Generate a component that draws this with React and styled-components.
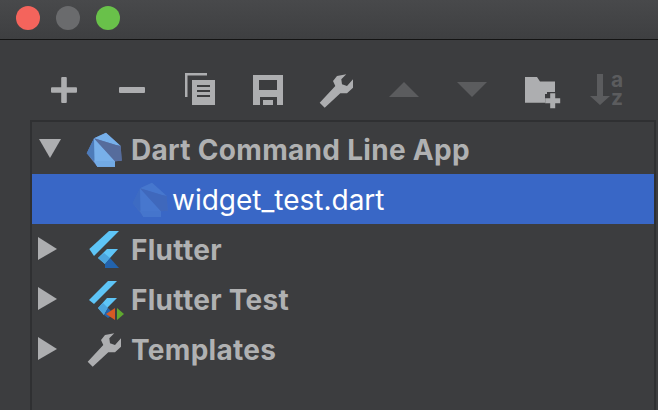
import styled, { createGlobalStyle } from 'styled-components'

const Global = createGlobalStyle`
  html, body { margin: 0; padding: 0; background: #3c3d3f; overflow: hidden; }
`

const Window = styled.div`
  width: 658px;
  height: 410px;
  background: #3c3d3f;
  display: flex;
  flex-direction: column;
  overflow: hidden;
  font-family: Inter, "Liberation Sans", Arial, sans-serif;
`

const TitleBar = styled.div`
  height: 35px;
  flex: none;
  display: flex;
  align-items: center;
  gap: 16px;
  padding: 0 0 4px 16px;
  background: linear-gradient(#48494b, #3e3f41);
  border-bottom: 1px solid #141414;
`

const Light = styled.div`
  width: 24px;
  height: 24px;
  border-radius: 50%;
  background: ${(p) => p.$color};
`

const Toolbar = styled.div`
  height: 80px;
  flex: none;
  display: flex;
  align-items: center;
  padding: 20px 0 0 30px;
  box-sizing: border-box;
`

const ToolButton = styled.div`
  width: 68px;
  height: 40px;
  display: flex;
  align-items: center;
  justify-content: center;
  color: ${(p) => (p.$off ? '#5b5c5e' : '#adaeb0')};
`

const TreePanel = styled.div`
  flex: 1;
  margin: 0 2px 0 30px;
  border: solid #2f3032;
  border-width: 2px 2px 0 2px;
  padding-top: 2px;
`

const Row = styled.div`
  height: 50px;
  display: flex;
  align-items: center;
  background: ${(p) => (p.$selected ? '#3967c6' : 'transparent')};
  color: ${(p) => (p.$selected ? '#ffffff' : '#b0b1b2')};
  font-size: 28px;
  letter-spacing: ${(p) => (p.$selected ? '0' : '0.3px')};
  font-weight: ${(p) => (p.$selected ? 400 : 700)};
`

const Arrow = styled.div`
  width: 30px;
  margin-left: 6px;
  flex: none;
  display: flex;
  color: #adaeb0;
`

const IconSlot = styled.div`
  width: 44px;
  height: 40px;
  margin-left: ${(p) => (p.$indent ? '96px' : '14px')};
  flex: none;
  display: flex;
  align-items: center;
  justify-content: center;
  color: #adaeb0;
`

const Label = styled.span`
  margin-left: ${(p) => (p.$nested ? '0' : '5px')};
  padding-top: 2px;
  white-space: nowrap;
`

const SortSvg = styled.svg`
  overflow: visible;
  font-family: Inter, "Liberation Sans", sans-serif;
  font-weight: 700;
  font-size: 21px;
`

const Wrench = () => (
  <svg width="36" height="36" viewBox="0 0 36 36" fill="currentColor">
    <path d="M1.7 30.7 L17.3 14 L15 9 L19 4 L28.3 2.3 L23.3 7.3 L24 12.3 L29 14 L35 7.3 L35 15.7 L29 21.3 L22.3 21.3 L6.7 35.7 Z" />
  </svg>
)

const Plus = () => (
  <svg width="26" height="26" viewBox="0 0 26 26" fill="currentColor">
    <rect x="0" y="10.2" width="26" height="5.6" rx="1" />
    <rect x="10.2" y="0" width="5.6" height="26" rx="1" />
  </svg>
)

const Minus = () => (
  <svg width="26" height="26" viewBox="0 0 26 26" fill="currentColor">
    <rect x="0" y="10" width="26" height="6" rx="1" />
  </svg>
)

const Copy = () => (
  <svg width="32" height="34" viewBox="0 0 32 34" fill="currentColor">
    <path d="M1 0 H23 V2.5 H3.5 V24 H1 Z" />
    <path fillRule="evenodd" d="M8 7 H31 V32 H8 Z M13 12 V14 H26 V12 Z M13 17 V19 H26 V17 Z M13 22 V24 H26 V22 Z" />
  </svg>
)

const Save = () => (
  <svg width="32" height="32" viewBox="0 0 32 32" fill="currentColor">
    <path fillRule="evenodd" d="M1 1 H31 V31 H1 Z M7 6 V16 H25 V6 Z M8 23 V31 H25 V23 Z" />
    <rect x="11" y="26" width="10" height="5" />
  </svg>
)

const Up = () => (
  <svg width="32" height="18" viewBox="0 0 32 18" fill="currentColor">
    <path d="M16 1 L31 16 H1 Z" />
  </svg>
)

const Down = () => (
  <svg width="32" height="18" viewBox="0 0 32 18" fill="currentColor">
    <path d="M1 1 H31 L16 16 Z" />
  </svg>
)

const FolderPlus = () => (
  <svg width="38" height="34" viewBox="0 0 38 34" fill="currentColor" style={{ overflow: 'visible' }}>
    <path d="M4 4 H16 L19 8.5 H34 V19 H26 V21 H24 V29.7 H4 Z" />
    <path d="M29.2 20.2 H34.2 V25.2 H39.2 V30.2 H34.2 V35.2 H29.2 V30.2 H24.2 V25.2 H29.2 Z" />
  </svg>
)

const Sort = () => (
  <SortSvg width="36" height="32" viewBox="0 0 36 32" fill="currentColor">
    <path d="M7 0 H13 V22 H20 L10 31 L0 22 H7 Z" />
    <text x="21" y="13">a</text>
    <text x="21" y="31">z</text>
  </SortSvg>
)

const Dart = ({ muted }) => (
  <svg width="36" height="36" viewBox="0 0 36 36" style={{ opacity: muted ? 0.22 : 1 }}>
    <path d="M0.7 22.3 L8 7.3 L20 1.7 L34.7 15 L35.7 29.7 L29 30.3 V35.7 H11.3 Z" fill="#5f7fb8" />
    <path d="M8 7.3 L20 1.7 L34.7 15 L30 14 Z" fill="#77b0ea" />
    <path d="M8 7.3 L29 30.3 V35.7 H11.3 L8 30 Z" fill="#78b0ea" />
    <path d="M8 7.3 L30 14 L34.7 15 L35.7 29.7 L29 30.3 Z" fill="#566c9c" />
    <path d="M0.7 22.3 L8 7.3 L8.5 30 Z" fill="#4d7bb9" />
    <path d="M9 30 H29 V35.7 H11.3 Z" fill="#72aae4" />
  </svg>
)

const Flutter = ({ test }) => (
  <svg width="36" height="40" viewBox="0 0 36 40" style={{ overflow: 'visible' }}>
    {test ? (
      <>
        <path d="M3 21 L22 2 H31 L8 25 Z" fill="#5ec5f7" />
        <path d="M12 29 L21 19 H31 L21 29 L18 36 Z" fill="#5ec5f7" />
        <path d="M12 29 L17 24 L22 29 L18 36 Z" fill="#4ba4dd" />
        <path d="M18 36 L22 29 L28 35 L22 39 Z" fill="#2263ad" />
        <path d="M29 29 V41 L20 35 Z" fill="#d55a24" />
        <path d="M31 29 L38 35 L31 41 Z" fill="#5fa830" />
      </>
    ) : (
      <>
        <path d="M3.3 20 L23 2 H33 L8 27 Z" fill="#5ec5f7" />
        <path d="M12 29 L21 20 H32 L24 29 L19 35 Z" fill="#5ec5f7" />
        <path d="M12 29 L18 24 L24 29 L19 35 Z" fill="#4ba4dd" />
        <path d="M19 35 L24 29 L33 39 H19 Z" fill="#2263ad" />
      </>
    )}
  </svg>
)

const Expander = ({ open }) => (
  <Arrow>
    {open ? (
      <svg width="24" height="20" viewBox="0 0 24 20" fill="currentColor">
        <path d="M1 0 H23 L12 19 Z" />
      </svg>
    ) : (
      <svg width="20" height="24" viewBox="0 0 20 24" fill="currentColor">
        <path d="M0 0 L19 12 L0 23 Z" />
      </svg>
    )}
  </Arrow>
)

const tools = [
  { key: 'add', icon: <Plus /> },
  { key: 'remove', icon: <Minus /> },
  { key: 'copy', icon: <Copy /> },
  { key: 'save', icon: <Save /> },
  { key: 'wrench', icon: <Wrench /> },
  { key: 'up', icon: <Up />, off: true },
  { key: 'down', icon: <Down />, off: true },
  { key: 'folder', icon: <FolderPlus /> },
  { key: 'sort', icon: <Sort />, off: true },
]

const App = () => (
  <Window>
    <Global />
    <TitleBar>
      <Light $color="#f4645c" />
      <Light $color="#6a6b6d" />
      <Light $color="#69c14a" />
    </TitleBar>
    <Toolbar>
      {tools.map((t) => (
        <ToolButton key={t.key} $off={t.off}>
          {t.icon}
        </ToolButton>
      ))}
    </Toolbar>
    <TreePanel>
      <Row>
        <Expander open />
        <IconSlot><Dart /></IconSlot>
        <Label>Dart Command Line App</Label>
      </Row>
      <Row $selected>
        <IconSlot $indent><Dart muted /></IconSlot>
        <Label $nested>widget_test.dart</Label>
      </Row>
      <Row>
        <Expander />
        <IconSlot><Flutter /></IconSlot>
        <Label>Flutter</Label>
      </Row>
      <Row>
        <Expander />
        <IconSlot><Flutter test /></IconSlot>
        <Label>Flutter Test</Label>
      </Row>
      <Row>
        <Expander />
        <IconSlot><Wrench /></IconSlot>
        <Label>Templates</Label>
      </Row>
    </TreePanel>
  </Window>
)

export default App
